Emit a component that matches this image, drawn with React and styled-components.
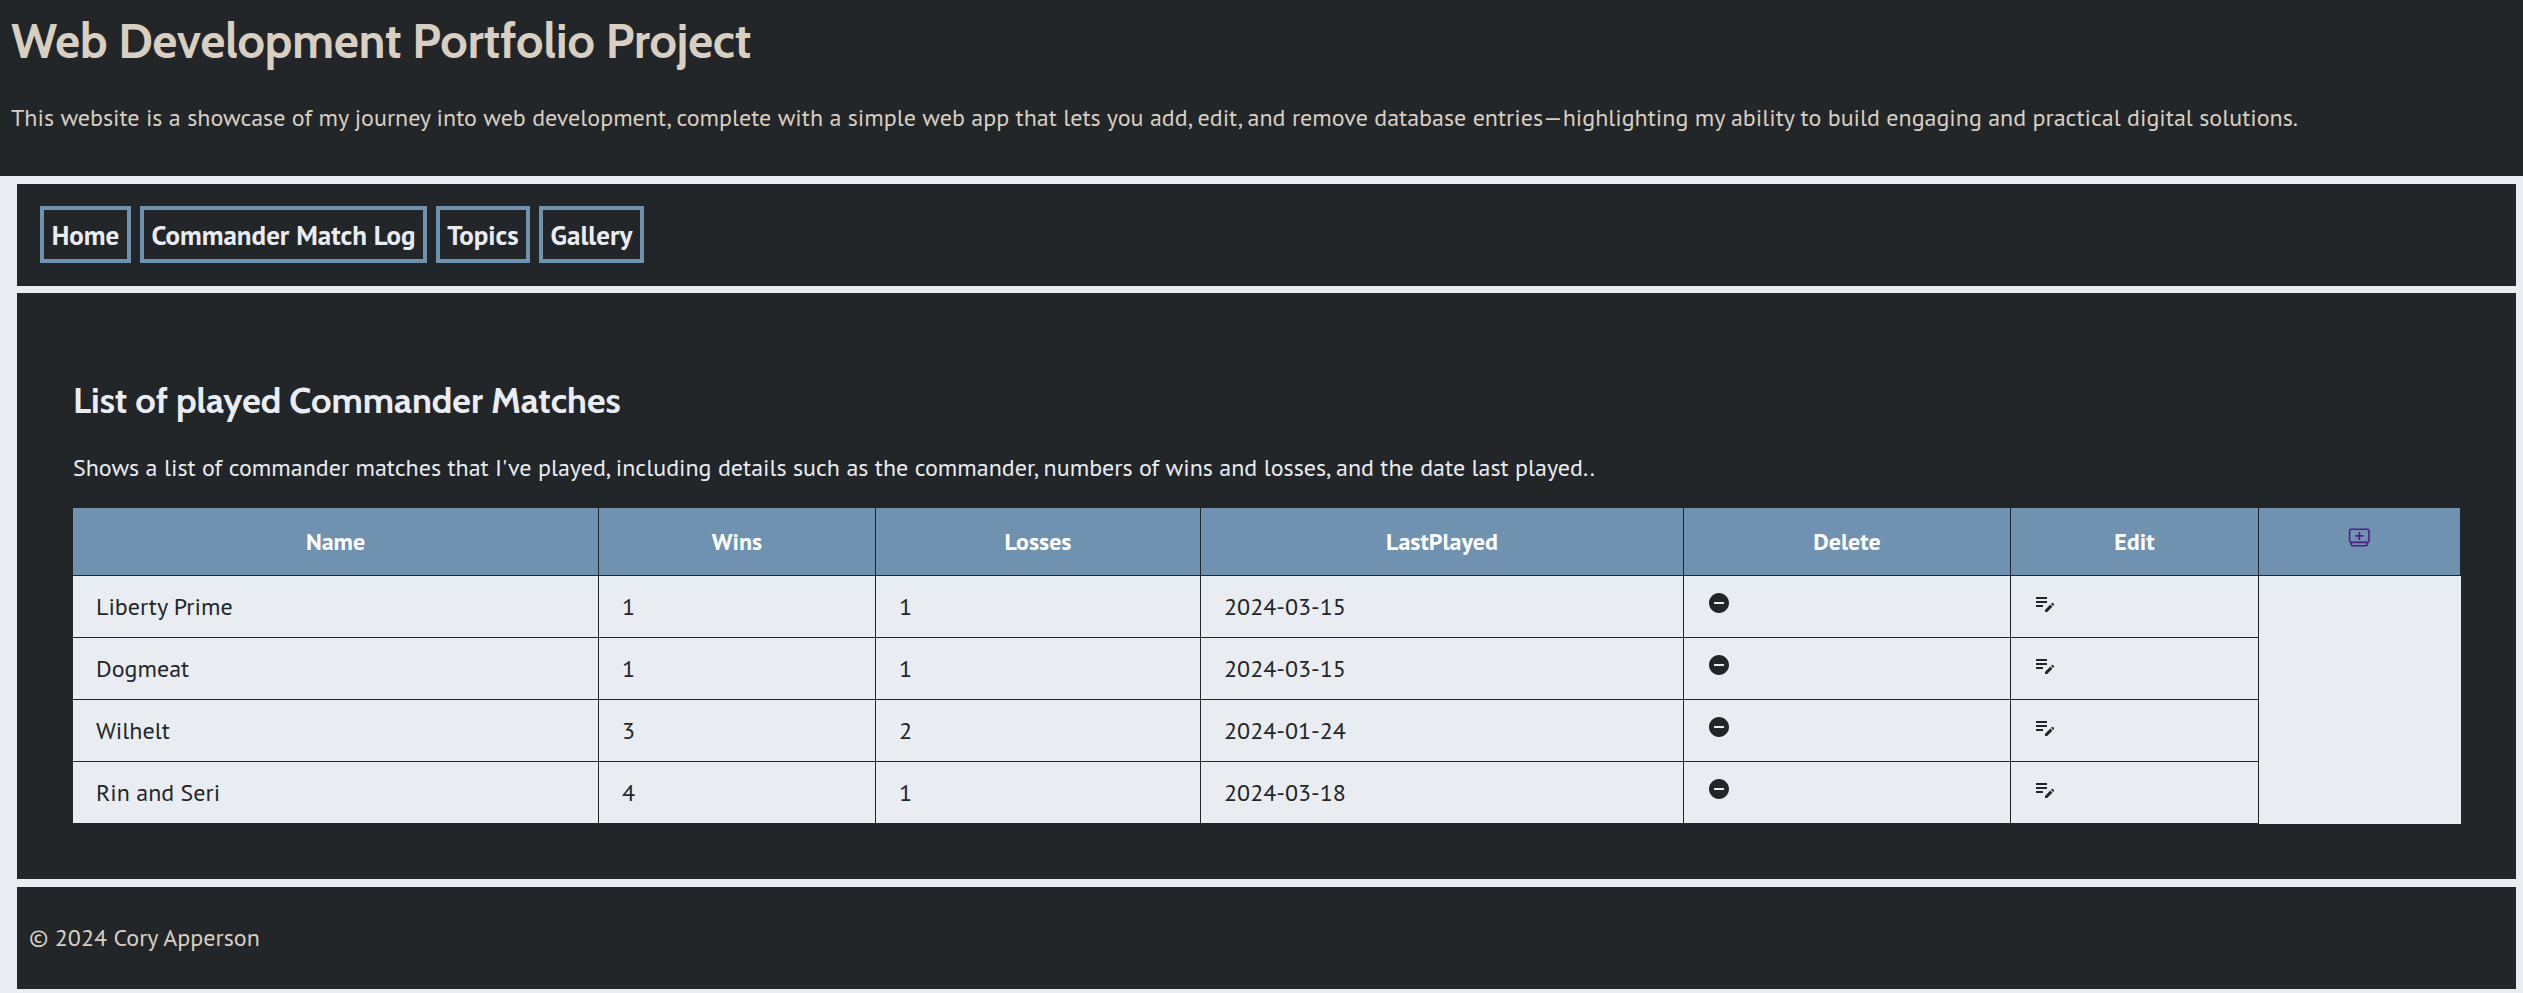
import React from 'react';
import styled, { createGlobalStyle } from 'styled-components';
import { MdEditNote, MdRemoveCircle } from 'react-icons/md';

const ink = '#222629';
const paper = '#e9edf2';
const steel = '#6f92b1';
const sand = '#d9cfc1';

const GlobalStyle = createGlobalStyle`
  body {
    margin: 0;
    background: ${paper};
    color: ${paper};
    font-family: "PT Sans", "Noto Sans", sans-serif;
    font-size: 24px;
  }
  * { box-sizing: border-box; }
`;

const Page = styled.div`
  display: flex;
  flex-direction: column;
  height: 993px;
`;

const Header = styled.header`
  height: 176px;
  padding: 12px 11px 0;
  background: ${ink};
  color: ${sand};
`;

const Title = styled.h1`
  margin: 0 0 32px;
  font: 700 48px/58px Cabin, Lato, sans-serif;
`;

const Paragraph = styled.p`
  margin: 0;
  line-height: 32px;
  white-space: nowrap;
`;

const Nav = styled.nav`
  display: flex;
  align-items: center;
  gap: 9px;
  height: 102px;
  margin: 8px 7px 7px 17px;
  padding: 0 23px 1px;
  background: ${ink};
`;

const NavLink = styled.a`
  display: flex;
  align-items: center;
  justify-content: center;
  width: ${(p) => p.$width}px;
  height: 57px;
  border: 4px solid ${steel};
  color: ${paper};
  font-size: 27px;
  font-weight: 700;
  line-height: 32px;
  white-space: nowrap;
`;

const Main = styled.main`
  height: 586px;
  margin: 0 7px 8px 17px;
  padding: 85px 55px 0 56px;
  background: ${ink};
`;

const SectionTitle = styled.h2`
  margin: 0 0 30px;
  font: 700 36px/44px Cabin, Lato, sans-serif;
`;

const Table = styled.table`
  width: 2388px;
  margin-top: 24px;
  table-layout: fixed;
  border-collapse: separate;
  border-spacing: 0;
`;

const Column = styled.col`
  width: ${(p) => p.$width}px;
`;

const HeadCell = styled.th`
  height: 68px;
  padding: 1px 0 0;
  background: ${steel};
  border-right: 1px solid ${ink};
  border-bottom: 1px solid ${ink};
  color: #fff;
  font-weight: 700;
  line-height: 32px;
`;

const Cell = styled.td`
  height: 62px;
  padding: 0 23px;
  background: ${paper};
  border-right: 1px solid ${ink};
  border-bottom: 1px solid ${ink};
  color: ${ink};
  line-height: 32px;
`;

const IconCell = styled(Cell)`
  padding: 0 ${(p) => p.$pad}px 7px;

  svg { display: block; }
`;

const BlankCell = styled.td`
  padding: 0;
  background: ${paper};
`;

const AddIcon = styled.svg`
  display: block;
  margin: 0 auto 9px;
  fill: none;
  stroke: #551a8b;
  stroke-width: 1.6;
`;

const Footer = styled.footer`
  height: 102px;
  margin: 0 7px 0 17px;
  padding: 35px 12px 0;
  background: ${ink};
  color: ${sand};
`;

const links = [
  { label: 'Home', width: 91 },
  { label: 'Commander Match Log', width: 287 },
  { label: 'Topics', width: 94 },
  { label: 'Gallery', width: 105 },
];

const columns = [
  { label: 'Name', width: 526 },
  { label: 'Wins', width: 277 },
  { label: 'Losses', width: 325 },
  { label: 'LastPlayed', width: 483 },
  { label: 'Delete', width: 327 },
  { label: 'Edit', width: 248 },
];

const matches = [
  { name: 'Liberty Prime', wins: 1, losses: 1, date: '2024-03-15' },
  { name: 'Dogmeat', wins: 1, losses: 1, date: '2024-03-15' },
  { name: 'Wilhelt', wins: 3, losses: 2, date: '2024-01-24' },
  { name: 'Rin and Seri', wins: 4, losses: 1, date: '2024-03-18' },
];

export default function App() {
  return (
    <Page>
      <GlobalStyle />
      <Header>
        <Title>Web Development Portfolio Project</Title>
        <Paragraph>
          This website is a showcase of my journey into web development, complete with a simple web app that lets you add, edit, and remove database entries—highlighting my ability to build engaging and practical digital solutions.
        </Paragraph>
      </Header>
      <Nav>
        {links.map((l) => (
          <NavLink key={l.label} $width={l.width}>{l.label}</NavLink>
        ))}
      </Nav>
      <Main>
        <SectionTitle>List of played Commander Matches</SectionTitle>
        <Paragraph>
          Shows a list of commander matches that I've played, including details such as the commander, numbers of wins and losses, and the date last played..
        </Paragraph>
        <Table>
          <colgroup>
            {columns.map((c) => <Column key={c.label} $width={c.width} />)}
            <Column $width={202} />
          </colgroup>
          <thead>
            <tr>
              {columns.map((c) => <HeadCell key={c.label}>{c.label}</HeadCell>)}
              <HeadCell>
                <AddIcon width="24" height="24" viewBox="0 0 24 24">
                  <rect x="1.6" y="3.2" width="19.4" height="13.2" rx="1.6" />
                  <path d="M3.2 16.6v1.2q0 2 2 2h12.2q2 0 2-2v-1.2M11.3 5.9v8M7.3 9.9h8" />
                </AddIcon>
              </HeadCell>
            </tr>
          </thead>
          <tbody>
            {matches.map((m, i) => (
              <tr key={m.name}>
                <Cell>{m.name}</Cell>
                <Cell>{m.wins}</Cell>
                <Cell>{m.losses}</Cell>
                <Cell>{m.date}</Cell>
                <IconCell $pad={23}><MdRemoveCircle size={24} /></IconCell>
                <IconCell $pad={22}><MdEditNote size={24} /></IconCell>
                {i === 0 && <BlankCell rowSpan={matches.length} />}
              </tr>
            ))}
          </tbody>
        </Table>
      </Main>
      <Footer>
        <Paragraph>© 2024 Cory Apperson</Paragraph>
      </Footer>
    </Page>
  );
}
